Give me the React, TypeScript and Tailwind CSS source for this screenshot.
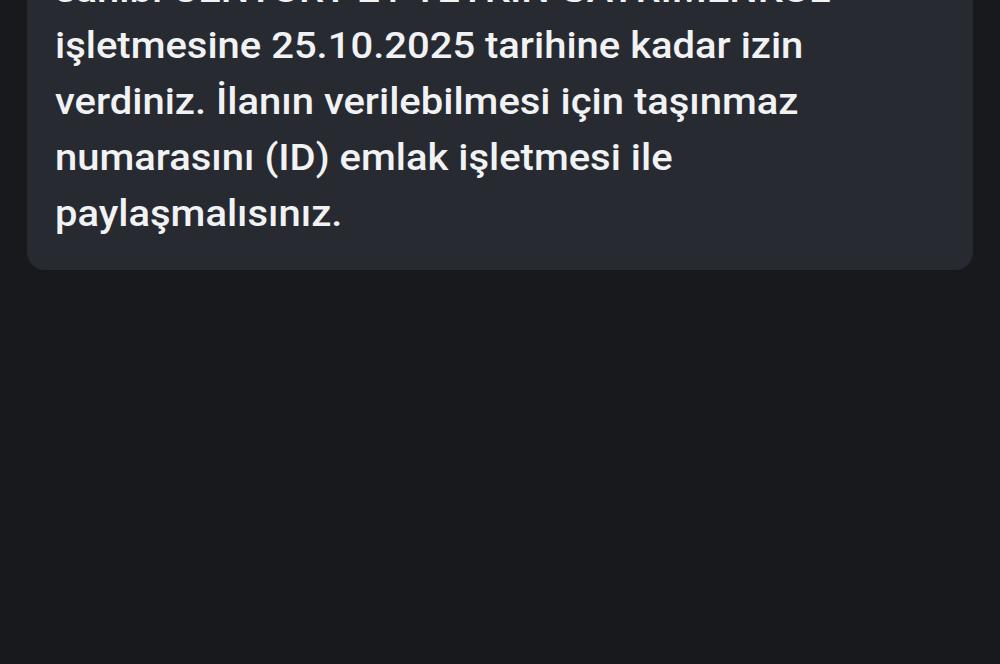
import React from 'react';

const lines = [
  'sahibi CENTURY 21 YETKİN GAYRİMENKUL',
  'işletmesine 25.10.2025 tarihine kadar izin',
  'verdiniz. İlanın verilebilmesi için taşınmaz',
  'numarasını (ID) emlak işletmesi ile',
  'paylaşmalısınız.',
];

export default function App() {
  return (
    <div className="w-[1000px] h-[664px] overflow-hidden bg-[#18191d]" style={{ fontFamily: 'Roboto, "Noto Sans", sans-serif' }}>
      <div className="px-[27px] -mt-[46px]">
        {/* Info card */}
        <div className="rounded-[18px] bg-[#272a31] pl-[28px] pr-[40px] pt-[8px] pb-[28px]">
          <p className="text-[37px] leading-[56px] font-medium text-[#f1f2f4] whitespace-nowrap origin-left scale-x-[1.08]">
            {lines.map((l, i) => (
              <span key={i} className="block">
                {l}
              </span>
            ))}
          </p>
        </div>
      </div>
    </div>
  );
}
